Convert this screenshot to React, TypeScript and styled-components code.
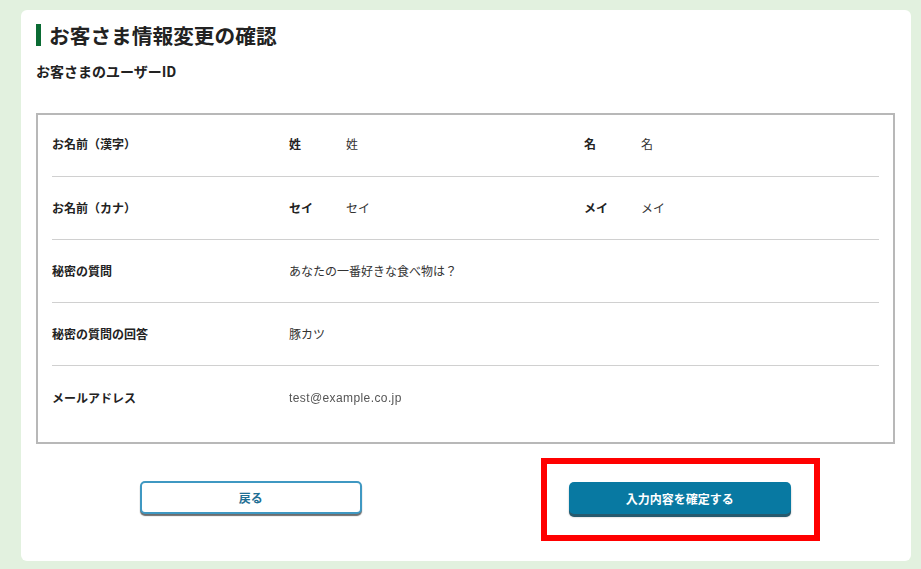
import React from "react";
import styled, { createGlobalStyle } from "styled-components";

const GlobalStyle = createGlobalStyle`
  html, body {
    margin: 0;
    padding: 0;
    background: #e2f1df;
    font-family: "Noto Sans CJK JP", "Noto Sans", sans-serif;
    color: #222;
  }
  * { box-sizing: border-box; }
`;

const Page = styled.div`
  padding: 10px 10px 8px 21px;
`;

const Card = styled.div`
  background: #fff;
  border-radius: 6px;
  padding: 14px 16px 20px 15px;
  height: 551px;
`;

const Title = styled.h1`
  display: flex;
  align-items: center;
  gap: 8px;
  height: 22px;
  margin: 0;
  font-size: 20.7px;
  font-weight: 700;
  line-height: 22px;
  color: #222;
  &::before {
    content: "";
    display: block;
    width: 5px;
    height: 22px;
    background: #0a6b33;
  }
`;

const SubTitle = styled.div`
  margin-top: 16px;
  font-size: 14px;
  font-weight: 700;
  line-height: 18px;
  color: #222;
`;

const InfoBox = styled.div`
  margin-top: 33px;
  border: 2px solid #b8b8b8;
  padding: 0 14px 12px;
`;

const Row = styled.div`
  display: grid;
  grid-template-columns: 237px 1fr 1fr;
  align-items: center;
  height: 63px;
  border-bottom: 1px solid #d0d0d0;
  &:first-child {
    height: 62px;
    padding-bottom: 3px;
  }
  &:last-child {
    border-bottom: none;
    height: 64px;
  }
`;

const Label = styled.div`
  font-size: 12px;
  font-weight: 700;
  line-height: 16px;
  color: #222;
`;

const Pair = styled.div`
  display: flex;
  align-items: center;
`;

const SubLabel = styled.span`
  width: 57px;
  font-size: 12px;
  font-weight: 700;
  line-height: 16px;
  color: #222;
`;

const Value = styled.span<{ $span?: boolean }>`
  font-size: 12px;
  line-height: 16px;
  color: #333;
  ${(p) => (p.$span ? "grid-column: 2 / 4;" : "")}
`;

const Email = styled.span`
  grid-column: 2 / 4;
  font-family: "Liberation Sans", sans-serif;
  font-size: 12px;
  letter-spacing: 0.4px;
  color: #555;
  filter: blur(0.6px);
`;

const Actions = styled.div`
  display: grid;
  grid-template-columns: 1fr 1fr;
  align-items: center;
  justify-items: center;
  margin-top: 14px;
`;

const BackButton = styled.button`
  width: 222px;
  height: 33px;
  border: 2px solid #3f98c2;
  border-radius: 5px;
  background: #fff;
  box-shadow: 0 2px 1px rgba(60, 60, 60, 0.75);
  font-family: "Noto Sans CJK JP", sans-serif;
  font-size: 12px;
  font-weight: 700;
  color: #1f6f94;
  margin-top: -5px;
`;

const Highlight = styled.div`
  border: 6px solid #ff0000;
  padding: 18px 23px 21px 22px;
`;

const ConfirmButton = styled.button`
  display: block;
  width: 222px;
  height: 32px;
  border: none;
  border-radius: 5px;
  background: #0879a2;
  box-shadow: 0 3px 0 #275a6e, 0 3px 2px rgba(0, 0, 0, 0.3);
  font-family: "Noto Sans CJK JP", sans-serif;
  font-size: 12px;
  font-weight: 700;
  color: #fff;
`;

export default function App() {
  return (
    <>
      <GlobalStyle />
      <Page>
        <Card>
          <Title>お客さま情報変更の確認</Title>
          <SubTitle>お客さまのユーザーID</SubTitle>
          <InfoBox>
            <Row>
              <Label>お名前（漢字）</Label>
              <Pair>
                <SubLabel>姓</SubLabel>
                <Value>姓</Value>
              </Pair>
              <Pair>
                <SubLabel>名</SubLabel>
                <Value>名</Value>
              </Pair>
            </Row>
            <Row>
              <Label>お名前（カナ）</Label>
              <Pair>
                <SubLabel>セイ</SubLabel>
                <Value>セイ</Value>
              </Pair>
              <Pair>
                <SubLabel>メイ</SubLabel>
                <Value>メイ</Value>
              </Pair>
            </Row>
            <Row>
              <Label>秘密の質問</Label>
              <Value $span>あなたの一番好きな食べ物は？</Value>
            </Row>
            <Row>
              <Label>秘密の質問の回答</Label>
              <Value $span>豚カツ</Value>
            </Row>
            <Row>
              <Label>メールアドレス</Label>
              <Email>test@example.co.jp</Email>
            </Row>
          </InfoBox>
          <Actions>
            <BackButton>戻る</BackButton>
            <Highlight>
              <ConfirmButton>入力内容を確定する</ConfirmButton>
            </Highlight>
          </Actions>
        </Card>
      </Page>
    </>
  );
}
